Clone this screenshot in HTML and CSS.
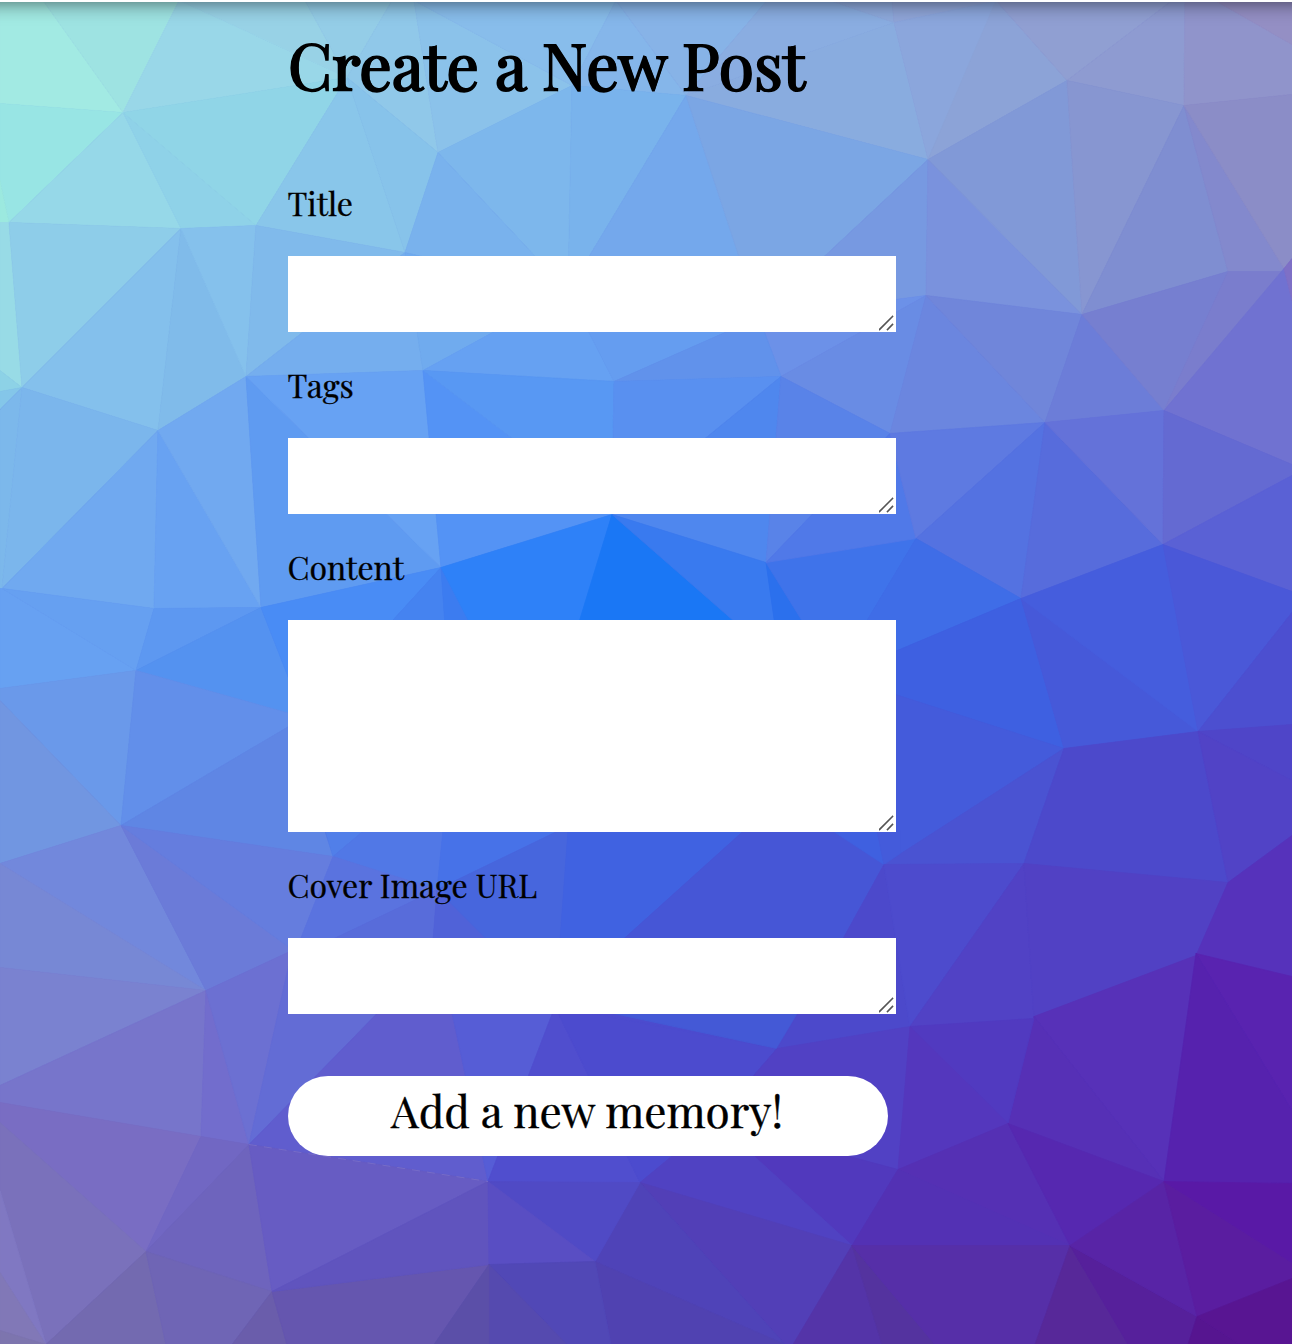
FILE: index.html
```html
<!DOCTYPE html>
<html lang="en">
<head>
<meta charset="utf-8">
<title>Create a New Post</title>
<link rel="stylesheet" href="styles.css">
</head>
<body>
<svg class="mesh" viewBox="0 0 1292 1344" aria-hidden="true">
<!-- upper left -->
<polygon color="#a2eae3" points="0,0 43,0 123,112 0,103"/>
<polygon color="#9ee3e2" points="43,0 179,0 123,112"/>
<polygon color="#98d2e6" points="179,0 305,0 347,77"/>
<polygon color="#99d7e8" points="179,0 347,77 123,112"/>
<polygon color="#94cde7" points="305,0 392,0 347,77"/>
<polygon color="#90c8e9" points="392,0 414,0 438,152 347,77"/>
<polygon color="#98e5e4" points="0,103 123,112 9,222 0,180"/>
<polygon color="#9ce9df" points="0,180 9,222 0,222"/>
<polygon color="#96d8e8" points="123,112 9,222 181,228"/>
<polygon color="#8fd2e8" points="123,112 181,228 256,225"/>
<polygon color="#90d5e7" points="123,112 347,77 256,225"/>
<polygon color="#89c6ea" points="347,77 256,225 405,252"/>
<polygon color="#87c3ea" points="347,77 405,252 438,152"/>
<polygon color="#98dbe6" points="0,222 9,222 22,387 0,370"/>
<polygon color="#8ecde9" points="9,222 181,228 22,387"/>
<polygon color="#84c0ec" points="181,228 22,387 158,430"/>
<polygon color="#80bbea" points="181,228 158,430 246,376"/>
<polygon color="#85c1ec" points="181,228 256,225 246,376"/>
<polygon color="#80baeb" points="256,225 405,252 246,376"/>
<polygon color="#75aeee" points="405,252 246,376 423,370"/>
<!-- upper middle -->
<polygon color="#8bc2ea" points="414,0 438,152 572,85"/>
<polygon color="#88bdeb" points="414,0 572,85 616,0"/>
<polygon color="#85b6ea" points="616,0 572,85 686,95"/>
<polygon color="#87b3e7" points="616,0 686,95 767,0"/>
<polygon color="#8aade1" points="767,0 830,0 894,22 686,95"/>
<polygon color="#89acdf" points="686,95 894,22 928,159"/>
<polygon color="#8da9dc" points="830,0 892,0 894,22"/>
<polygon color="#7db7ec" points="438,152 572,85 568,291"/>
<polygon color="#79b3ec" points="572,85 686,95 568,291"/>
<polygon color="#79b2ed" points="438,152 568,291 405,252"/>
<polygon color="#70abee" points="405,252 568,291 423,370"/>
<polygon color="#66a1f2" points="568,291 423,370 614,381"/>
<polygon color="#659df0" points="568,291 614,381 759,317"/>
<polygon color="#74a8ec" points="568,291 686,95 759,317"/>
<polygon color="#7ba6e4" points="686,95 928,159 759,317"/>
<polygon color="#7799e1" points="928,159 926,295 759,317"/>
<polygon color="#6c91e8" points="759,317 926,295 781,376"/>
<polygon color="#6192eb" points="614,381 781,376 759,317"/>
<!-- upper right -->
<polygon color="#8fa5d8" points="892,0 1000,0 894,22"/>
<polygon color="#8ba6dc" points="894,22 928,159 999,0"/>
<polygon color="#8ca3d7" points="996,0 928,159 1067,80"/>
<polygon color="#909fd2" points="996,0 1067,80 1172,0"/>
<polygon color="#8e9bd1" points="1172,0 1185,0 1184,105 1067,80"/>
<polygon color="#9094cb" points="1185,0 1215,0 1292,44 1292,94 1184,105"/>
<polygon color="#948fc4" points="1215,0 1292,0 1292,44"/>
<polygon color="#7a92dd" points="928,159 926,295 1082,314"/>
<polygon color="#8199d7" points="928,159 1082,314 1067,80"/>
<polygon color="#8796d1" points="1067,80 1082,314 1184,105"/>
<polygon color="#7f8ed1" points="1184,105 1082,314 1228,271"/>
<polygon color="#8389cd" points="1184,105 1228,271 1283,271 1284,268"/>
<polygon color="#8b8dc7" points="1184,105 1284,268 1292,258 1292,94"/>
<polygon color="#698ce4" points="781,376 926,295 890,433"/>
<polygon color="#6b86df" points="926,295 890,433 1045,422"/>
<polygon color="#7086da" points="926,295 1082,314 1045,422"/>
<polygon color="#6c7dd8" points="1082,314 1045,422 1164,410"/>
<polygon color="#767fd0" points="1082,314 1228,271 1164,410"/>
<polygon color="#7a7dcd" points="1228,271 1284,271 1164,410"/>
<polygon color="#7072d1" points="1284,268 1292,300 1292,464 1164,410"/>
<polygon color="#7e70c6" points="1284,268 1292,258 1292,300"/>
<!-- centre left -->
<polygon color="#8dd2e6" points="0,370 22,387 0,391"/>
<polygon color="#84c6e9" points="0,391 22,387 0,409"/>
<polygon color="#7cb8eb" points="0,409 22,387 2,588 0,588"/>
<polygon color="#7bb6ec" points="22,387 158,430 2,588"/>
<polygon color="#70a9f0" points="158,430 2,588 154,608"/>
<polygon color="#68a2f2" points="158,430 154,608 261,607"/>
<polygon color="#71a9f0" points="158,430 261,607 246,376"/>
<polygon color="#5f9bf1" points="246,376 261,607 441,567"/>
<polygon color="#67a2f3" points="246,376 441,567 423,370"/>
<polygon color="#5493f5" points="423,370 441,567 612,514"/>
<polygon color="#5898f3" points="423,370 614,381 612,514"/>
<polygon color="#5990f0" points="614,381 781,376 612,514"/>
<polygon color="#4f87ee" points="781,376 612,514 766,562"/>
<polygon color="#5983e8" points="781,376 890,433 766,562"/>
<polygon color="#67a1f2" points="0,588 2,588 136,670 0,688"/>
<polygon color="#66a0f1" points="2,588 154,608 136,670"/>
<polygon color="#5d98f1" points="154,608 261,607 136,670"/>
<polygon color="#5492f0" points="261,607 136,670 304,717"/>
<polygon color="#498cf5" points="261,607 441,567 304,717"/>
<polygon color="#4583f0" points="441,567 445,625 304,717"/>
<polygon color="#3c7cf0" points="441,567 445,625 471,625"/>
<polygon color="#2e81f8" points="441,567 612,514 579,625 471,625"/>
<polygon color="#1a77f5" points="612,514 739,625 578,625"/>
<polygon color="#397aef" points="612,514 766,562 775,625 739,625"/>
<polygon color="#2b70ed" points="766,562 775,625 805,625"/>
<polygon color="#3f73ea" points="766,562 916,538 864,625 805,625"/>
<!-- centre right -->
<polygon color="#5079e8" points="890,433 766,562 916,538"/>
<polygon color="#5e7ae1" points="890,433 916,538 1045,422"/>
<polygon color="#5472e1" points="916,538 1045,422 1021,598"/>
<polygon color="#576cdc" points="1045,422 1163,544 1021,598"/>
<polygon color="#6472d9" points="1045,422 1164,410 1163,544"/>
<polygon color="#646ad2" points="1164,410 1292,464 1292,475 1163,544"/>
<polygon color="#5a61d5" points="1163,544 1292,475 1292,591"/>
<polygon color="#3f6de7" points="916,538 864,625 864,664 1021,598"/>
<polygon color="#3e60e1" points="1021,598 864,664 864,684 1064,748"/>
<polygon color="#445bdb" points="1064,748 864,684 864,864 884,864"/>
<polygon color="#4659d9" points="1021,598 1064,748 1198,731"/>
<polygon color="#455ddd" points="1021,598 1163,544 1198,731"/>
<polygon color="#4a58d8" points="1163,544 1292,591 1292,612 1198,731"/>
<polygon color="#4c4fd0" points="1198,731 1292,612 1292,724"/>
<polygon color="#4a53d2" points="1064,748 884,864 1024,863"/>
<polygon color="#4c49cb" points="1064,748 1024,863 1228,882 1198,731"/>
<polygon color="#4f45c8" points="1198,731 1292,724 1292,780"/>
<polygon color="#5143c6" points="1198,731 1292,780 1292,835 1228,882"/>
<!-- lower left -->
<polygon color="#6a99ea" points="0,688 136,670 121,825 0,700"/>
<polygon color="#7196e1" points="0,700 121,825 0,863"/>
<polygon color="#628fea" points="136,670 121,825 304,717"/>
<polygon color="#5f86e4" points="121,825 304,717 325,832 333,856"/>
<polygon color="#7288dc" points="121,825 0,863 206,990"/>
<polygon color="#7788d5" points="0,863 206,990 0,967"/>
<polygon color="#6b7bd8" points="121,825 206,990 288,952 288,946"/>
<polygon color="#657dde" points="121,825 333,856 300,940 288,946"/>
<polygon color="#517fe9" points="325,830 333,856 364,830"/>
<polygon color="#5178e6" points="333,856 364,830 443,830 437,889"/>
<polygon color="#5a73df" points="333,856 437,889 330,940 300,940"/>
<polygon color="#586cda" points="437,889 330,940 433,940"/>
<polygon color="#5062d8" points="437,889 433,940 488,940"/>
<polygon color="#4772e8" points="437,889 443,830 559,830"/>
<polygon color="#4766dd" points="437,889 559,830 568,830 560,940 488,940"/>
<polygon color="#4062e1" points="568,830 744,830 622,940 560,940"/>
<polygon color="#4656d6" points="744,830 832,830 884,864 842,940 622,940"/>
<polygon color="#3f60e0" points="832,830 877,830 884,864"/>
<polygon color="#445bdb" points="877,830 900,830 900,853 884,864"/>
<polygon color="#7a82d0" points="0,967 206,990 0,1085"/>
<polygon color="#7775cb" points="206,990 0,1085 0,1102 201,1136"/>
<polygon color="#726dcd" points="206,990 201,1136 249,1144"/>
<polygon color="#6c70d2" points="206,990 292,950 249,1144"/>
<polygon color="#636cd5" points="292,950 249,1144 378,1012"/>
<polygon color="#605dce" points="249,1144 378,1012 452,1012 488,1181"/>
<polygon color="#796dc3" points="0,1102 201,1136 146,1251 0,1122"/>
<polygon color="#7167c3" points="201,1136 249,1144 146,1251"/>
<polygon color="#6e64bd" points="249,1144 146,1251 272,1291"/>
<polygon color="#675cc3" points="249,1144 488,1181 272,1291"/>
<polygon color="#7a71bb" points="0,1122 146,1251 46,1344 0,1190"/>
<polygon color="#8078c2" points="0,1190 46,1344 0,1272"/>
<polygon color="#8178b7" points="0,1272 46,1344 0,1330"/>
<polygon color="#7d75ae" points="0,1330 46,1344 0,1344"/>
<polygon color="#736ab0" points="146,1251 46,1344 166,1344"/>
<polygon color="#6f65b5" points="146,1251 166,1344 232,1344 272,1291"/>
<polygon color="#6a5dab" points="272,1291 232,1344 287,1344"/>
<polygon color="#6556af" points="272,1291 489,1264 434,1344 287,1344"/>
<polygon color="#6054be" points="488,1181 489,1264 272,1291"/>
<!-- lower middle -->
<polygon color="#565dd6" points="452,1012 555,1006 488,1181"/>
<polygon color="#504ece" points="555,1006 488,1181 640,1182"/>
<polygon color="#4c4bce" points="555,1006 777,1048 715,1120 640,1182"/>
<polygon color="#4459d6" points="590,1008 800,1008 777,1048"/>
<polygon color="#4c49cb" points="884,864 842,940 777,1048 910,1026"/>
<polygon color="#5141c4" points="777,1048 910,1026 898,1169 715,1120"/>
<polygon color="#5139bd" points="715,1120 898,1169 852,1245"/>
<polygon color="#5042c2" points="715,1120 640,1182 852,1245"/>
<polygon color="#523fb7" points="640,1182 852,1245 793,1344 785,1344"/>
<polygon color="#4f43b8" points="640,1182 595,1261 785,1344"/>
<polygon color="#5042b1" points="595,1261 611,1344 785,1344"/>
<polygon color="#504ac5" points="488,1181 640,1182 595,1261"/>
<polygon color="#594ec3" points="488,1181 595,1261 489,1264"/>
<polygon color="#5148b6" points="489,1264 595,1261 611,1344 567,1344"/>
<polygon color="#554aaf" points="489,1264 567,1344 489,1344"/>
<polygon color="#5b4fa8" points="489,1264 489,1344 434,1344"/>
<!-- lower right -->
<polygon color="#4d4bcd" points="884,864 1024,863 910,1026"/>
<polygon color="#5142c5" points="1024,863 910,1026 1034,1018"/>
<polygon color="#5141c4" points="1024,863 1228,882 1196,957 1034,1018"/>
<polygon color="#5632bb" points="1228,882 1292,835 1292,976 1196,955"/>
<polygon color="#5731b8" points="1196,955 1034,1016 1164,1181"/>
<polygon color="#5630b6" points="1034,1016 1008,1123 1164,1181"/>
<polygon color="#5923b0" points="1196,953 1292,976 1292,1110"/>
<polygon color="#5622ae" points="1196,953 1292,1110 1292,1183 1164,1181"/>
<polygon color="#513ac0" points="910,1026 1034,1018 1008,1123"/>
<polygon color="#5437bd" points="910,1026 1008,1123 898,1169"/>
<polygon color="#5530b4" points="1008,1123 898,1169 1070,1245"/>
<polygon color="#5331b4" points="898,1169 1070,1245 852,1245"/>
<polygon color="#5628b0" points="1008,1123 1164,1181 1070,1245"/>
<polygon color="#5434a8" points="852,1245 793,1344 882,1344"/>
<polygon color="#54339f" points="852,1245 882,1344 935,1344"/>
<polygon color="#562fa8" points="852,1245 935,1344 1035,1344 1070,1245"/>
<polygon color="#572899" points="1070,1245 1035,1344 1128,1344"/>
<polygon color="#56209b" points="1070,1245 1128,1344 1188,1344 1197,1316"/>
<polygon color="#5824a6" points="1164,1181 1070,1245 1197,1316"/>
<polygon color="#5a1da0" points="1164,1181 1197,1316 1292,1278 1292,1262"/>
<polygon color="#5919a6" points="1164,1181 1292,1183 1292,1262"/>
<polygon color="#561590" points="1197,1316 1240,1344 1188,1344"/>
<polygon color="#581592" points="1197,1316 1292,1278 1292,1344 1240,1344"/>
<path class="glint" d="M249,1144 L488,1181"/>
</svg>

<header class="topbar"></header>

<main class="page">
  <h1 class="heading">Create a New Post</h1>
  <form class="form">
    <label class="label" for="title">Title</label>
    <div class="field">
      <textarea class="input" id="title"></textarea>
      <svg class="grip" viewBox="0 0 16 16"><path d="M.5 14.500 13.500 1.500M8.500 14.500 13.500 9.500"/></svg>
    </div>
    <label class="label" for="tags">Tags</label>
    <div class="field">
      <textarea class="input" id="tags"></textarea>
      <svg class="grip" viewBox="0 0 16 16"><path d="M.5 14.500 13.500 1.500M8.500 14.500 13.500 9.500"/></svg>
    </div>
    <label class="label" for="content">Content</label>
    <div class="field field-tall">
      <textarea class="input" id="content"></textarea>
      <svg class="grip" viewBox="0 0 16 16"><path d="M.5 14.500 13.500 1.500M8.500 14.500 13.500 9.500"/></svg>
    </div>
    <label class="label" for="cover">Cover Image URL</label>
    <div class="field">
      <textarea class="input" id="cover"></textarea>
      <svg class="grip" viewBox="0 0 16 16"><path d="M.5 14.500 13.500 1.500M8.500 14.500 13.500 9.500"/></svg>
    </div>
    <button class="submit" type="button">Add a new memory!</button>
  </form>
</main>
</body>
</html>
```

FILE: styles.css
```css
* {
  box-sizing: border-box;
}

body {
  margin: 0;
  height: 1344px;
  position: relative;
  overflow: hidden;
  background: #4c4bce;
  color: #000;
  font-family: "Playfair Display", "Liberation Serif", serif;
}

.mesh {
  position: absolute;
  inset: 0;
  z-index: -1;
  width: 1292px;
  height: 1345px;
}

.mesh polygon {
  fill: currentColor;
  stroke: currentColor;
  stroke-width: 0.8;
  stroke-linejoin: round;
}

.mesh .glint {
  fill: none;
  stroke: #7a70c8;
  stroke-width: 0.8;
  stroke-dasharray: 8 7;
}

.topbar {
  height: 60px;
  margin: -58px -30px 0;
  background: #fff;
  box-shadow: 0 0 20px rgba(0, 0, 0, 0.6);
}

.page {
  width: 608px;
  margin-left: 288px;
}

.heading {
  margin: 0 0 25px;
  font-size: 64px;
  font-weight: 400;
  line-height: 123px;
  letter-spacing: 0.06px;
  -webkit-text-stroke: 2px #000;
  text-shadow: 0.8px 0 0 #000;
  white-space: nowrap;
}

.form {
  display: flex;
  flex-direction: column;
}

.label {
  margin-left: -0.6px;
  font-size: 32px;
  line-height: 106px;
  -webkit-text-stroke: 0.3px #000;
}

.field {
  position: relative;
  height: 76px;
}

.field-tall {
  height: 212px;
}

.input {
  display: block;
  width: 100%;
  height: 100%;
  padding: 4px;
  border: 0;
  background: #fff;
  font: inherit;
  resize: none;
  outline: none;
}

.grip {
  position: absolute;
  right: 1px;
  bottom: 1px;
  width: 16px;
  height: 16px;
  fill: none;
  stroke: #555;
  stroke-width: 1.6;
  stroke-linecap: square;
}

.submit {
  display: flex;
  align-items: center;
  justify-content: center;
  width: 600px;
  height: 80px;
  margin: 62px 0 0;
  padding: 0 2px 13px 0;
  border: 0;
  border-radius: 40px;
  background: #fff;
  color: #000;
  font: 44px "Playfair Display", "Liberation Serif", serif;
  -webkit-text-stroke: 0.4px #000;
}
```
